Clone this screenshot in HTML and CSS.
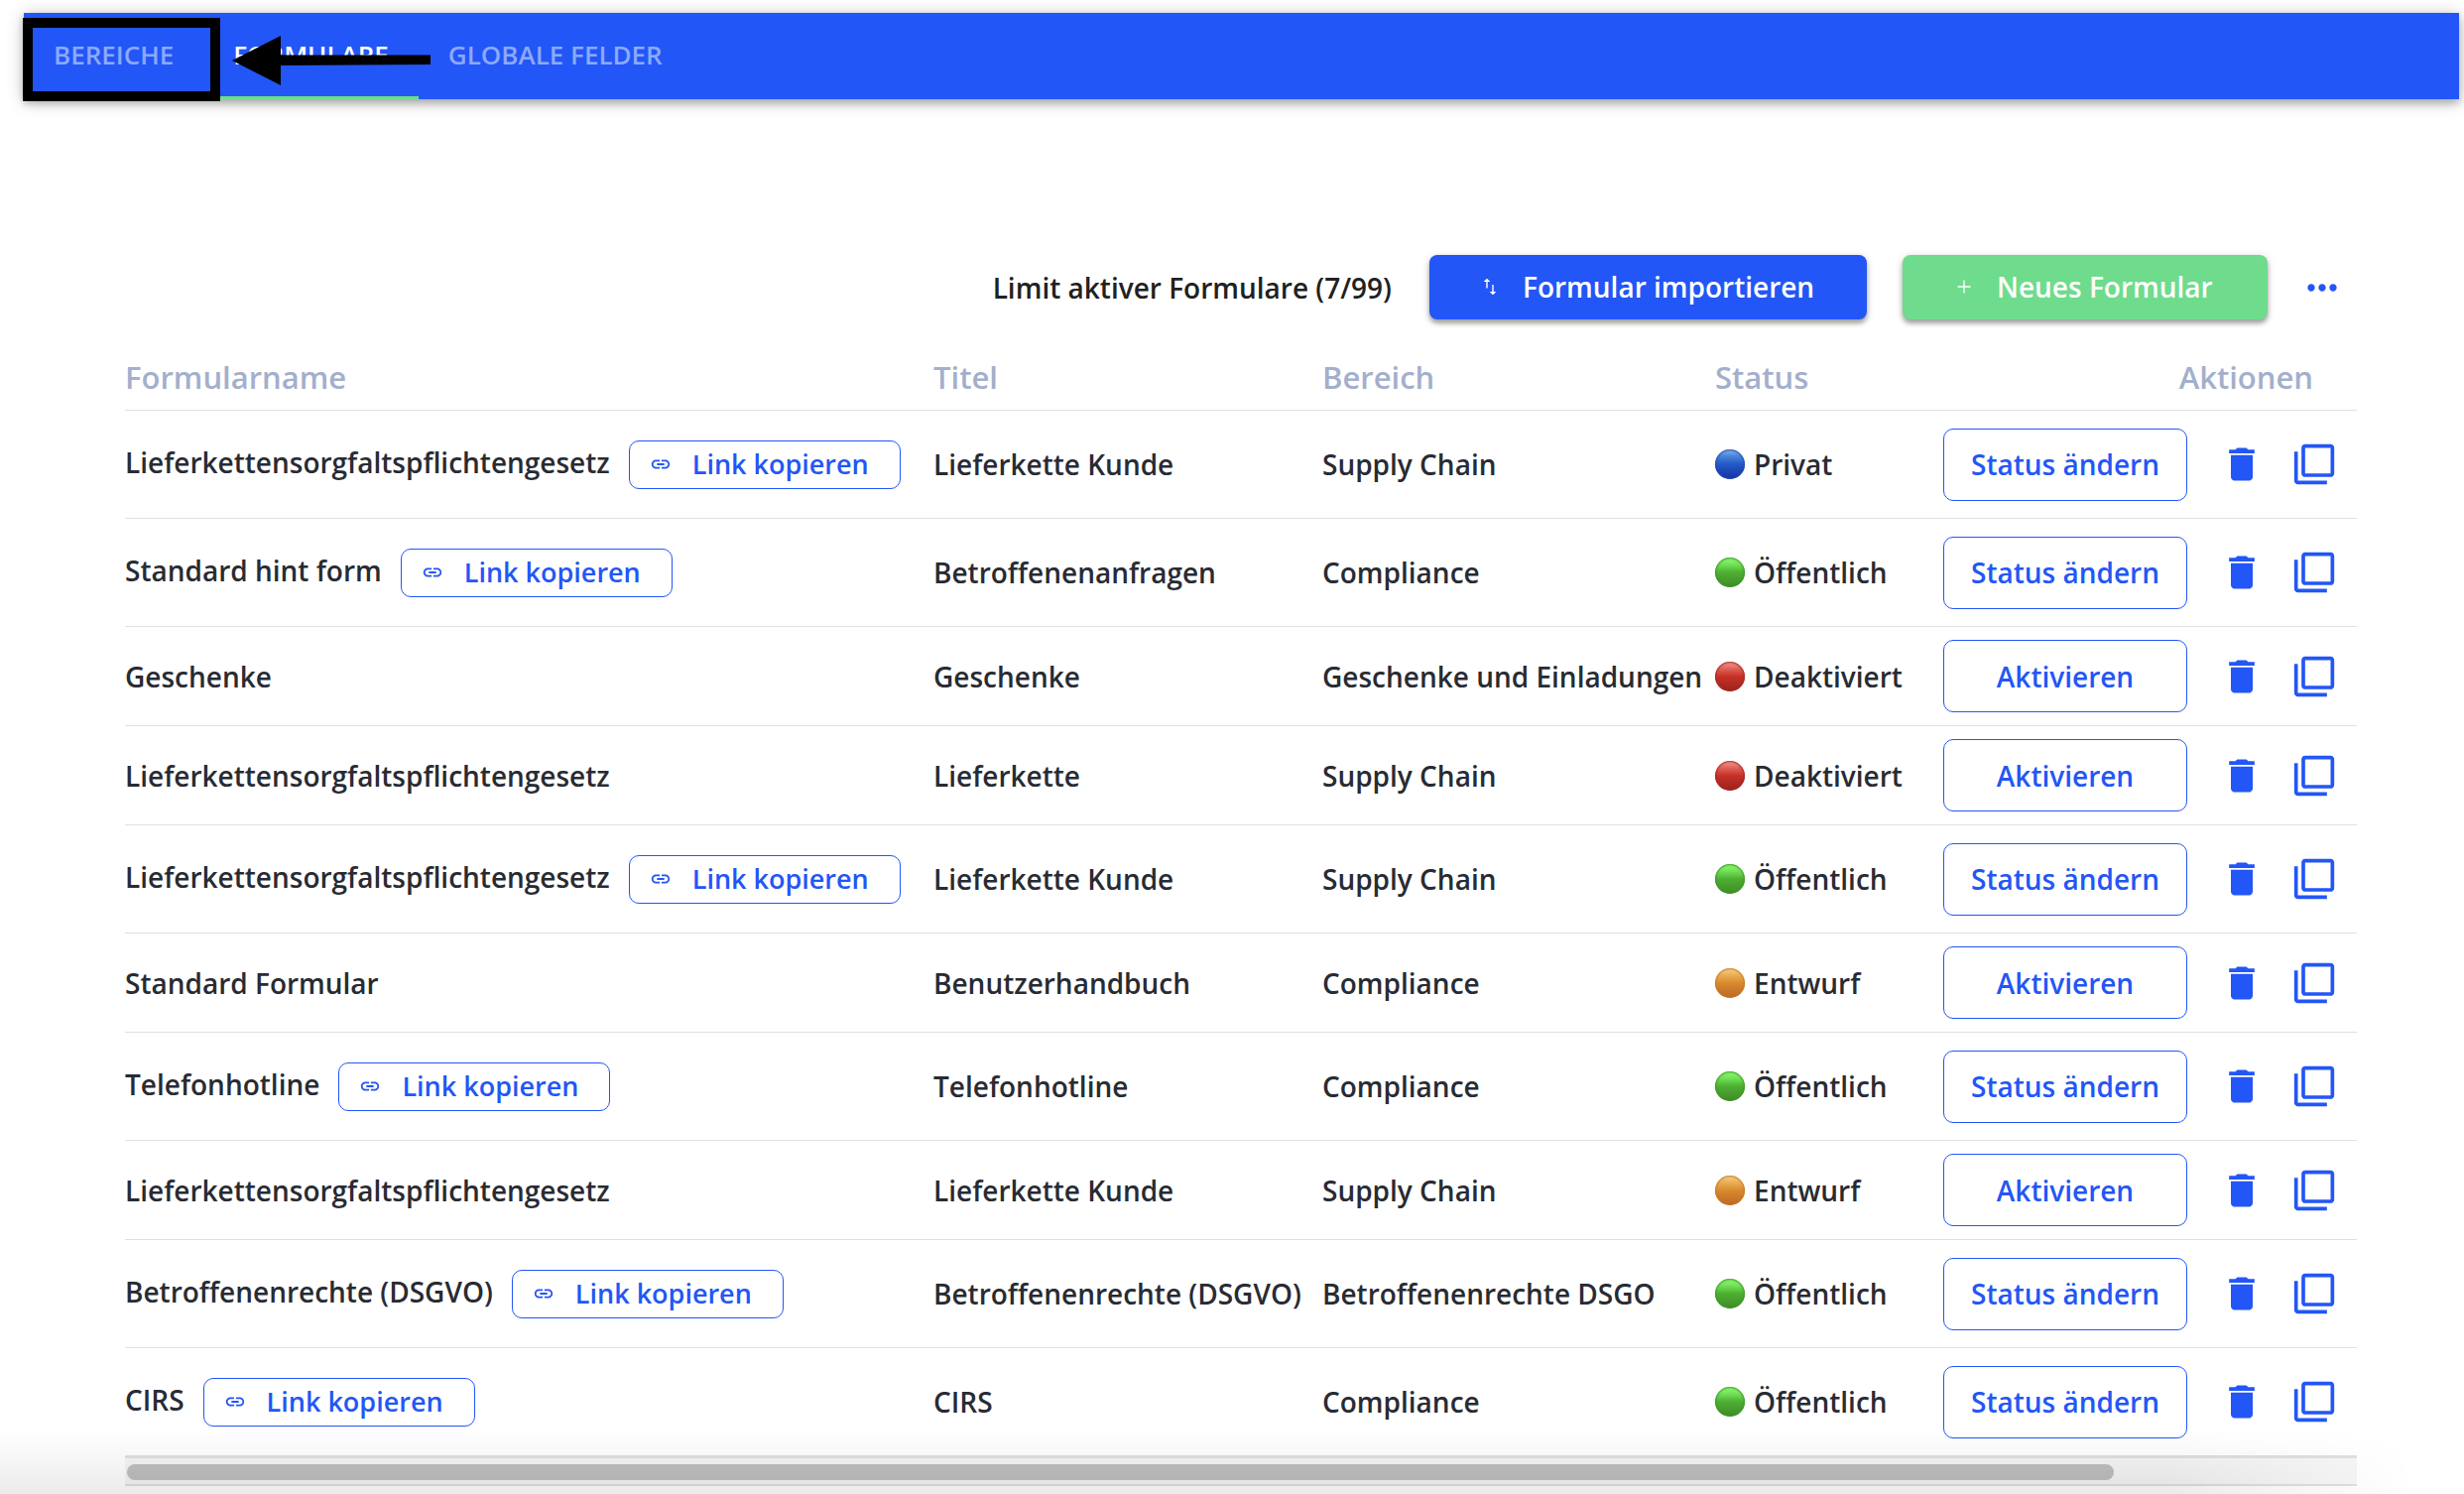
FILE: index.html
```html
<!DOCTYPE html>
<html lang="de">
<head>
<meta charset="utf-8">
<meta name="viewport" content="width=device-width, initial-scale=1">
<title>Formulare</title>
<link rel="stylesheet" href="styles.css">
</head>
<body>
<svg class="sprite" aria-hidden="true">
  <symbol id="i-link" viewBox="0 0 24 24"><path d="M3.9 12c0-1.71 1.39-3.1 3.1-3.1h4V7H7c-2.76 0-5 2.24-5 5s2.24 5 5 5h4v-1.9H7c-1.71 0-3.1-1.39-3.1-3.1zM8 13h8v-2H8v2zm9-6h-4v1.9h4c1.71 0 3.1 1.39 3.1 3.1s-1.39 3.1-3.1 3.1h-4V17h4c2.76 0 5-2.24 5-5s-2.24-5-5-5z"/></symbol>
  <symbol id="i-trash" viewBox="0 0 24 24"><path d="M6 19c0 1.1.9 2 2 2h8c1.1 0 2-.9 2-2V7H6v12zM19 4h-3.500l-1-1h-5l-1 1H5v2h14V4z"/></symbol>
  <symbol id="i-copy" viewBox="0 0 24 24"><path d="M3 5H1v16c0 1.1.9 2 2 2h16v-2H3V5zm18-4H7c-1.1 0-2 .9-2 2v14c0 1.1.9 2 2 2h14c1.1 0 2-.9 2-2V3c0-1.1-.9-2-2-2zm0 16H7V3h14v14z"/></symbol>
  <symbol id="i-dots" viewBox="0 0 24 24"><path d="M6 10c-1.1 0-2 .9-2 2s.9 2 2 2 2-.9 2-2-.9-2-2-2zm12 0c-1.1 0-2 .9-2 2s.9 2 2 2 2-.9 2-2-.9-2-2-2zm-6 0c-1.1 0-2 .9-2 2s.9 2 2 2 2-.9 2-2-.9-2-2-2z"/></symbol>
  <symbol id="i-swap" viewBox="0 0 14 18"><path d="M3.300 10.500V4H.6L4 .8 7.400 4H4.700v6.500zM9.300 7v7H6.600L10 17.200 13.400 14H10.700V7z"/></symbol>
  <symbol id="i-plus" viewBox="0 0 14 14"><path d="M7 0.500v13M0.500 7h13" fill="none" stroke="currentColor" stroke-width="1.400"/></symbol>
</svg>

<header class="topbar">
  <nav class="tabs">
    <a class="tab" href="#bereiche">BEREICHE</a>
    <a class="tab tab-active" href="#formulare" aria-current="page">FORMULARE</a>
    <a class="tab" href="#felder">GLOBALE FELDER</a>
  </nav>
  <div class="marker-box"></div>
  <svg class="marker-arrow" viewBox="0 0 200 50" aria-hidden="true"><path d="M0 25L49 0v19.500h151v9.500L49 30v20z"/></svg>
</header>

<main class="content">
  <div class="toolbar">
    <span class="limit">Limit aktiver Formulare (7/99)</span>
    <button class="btn btn-import" type="button"><svg class="ico-swap"><use href="#i-swap"/></svg>Formular importieren</button>
    <button class="btn btn-new" type="button"><svg class="ico-plus"><use href="#i-plus"/></svg>Neues Formular</button>
    <button class="icon-btn more" type="button" aria-label="Mehr"><svg><use href="#i-dots"/></svg></button>
  </div>

  <table class="forms">
    <colgroup><col><col class="c-title"><col class="c-area"><col class="c-status"><col class="c-actions"></colgroup>
    <thead>
      <tr><th>Formularname</th><th>Titel</th><th>Bereich</th><th>Status</th><th class="th-actions">Aktionen</th></tr>
    </thead>
    <tbody>
      <tr class="tall"><td><div class="name"><span>Lieferkettensorgfaltspflichtengesetz</span><button class="link-btn" type="button"><svg><use href="#i-link"/></svg>Link kopieren</button></div></td><td>Lieferkette Kunde</td><td>Supply Chain</td><td><div class="status"><i class="dot blue"></i>Privat</div></td><td><div class="actions"><button class="state-btn" type="button">Status ändern</button><button class="icon-btn trash" type="button" aria-label="Löschen"><svg><use href="#i-trash"/></svg></button><button class="icon-btn" type="button" aria-label="Kopieren"><svg><use href="#i-copy"/></svg></button></div></td></tr>
      <tr class="tall"><td><div class="name"><span>Standard hint form</span><button class="link-btn" type="button"><svg><use href="#i-link"/></svg>Link kopieren</button></div></td><td>Betroffenenanfragen</td><td>Compliance</td><td><div class="status"><i class="dot green"></i>Öffentlich</div></td><td><div class="actions"><button class="state-btn" type="button">Status ändern</button><button class="icon-btn trash" type="button" aria-label="Löschen"><svg><use href="#i-trash"/></svg></button><button class="icon-btn" type="button" aria-label="Kopieren"><svg><use href="#i-copy"/></svg></button></div></td></tr>
      <tr><td>Geschenke</td><td>Geschenke</td><td>Geschenke und Einladungen</td><td><div class="status"><i class="dot red"></i>Deaktiviert</div></td><td><div class="actions"><button class="state-btn" type="button">Aktivieren</button><button class="icon-btn trash" type="button" aria-label="Löschen"><svg><use href="#i-trash"/></svg></button><button class="icon-btn" type="button" aria-label="Kopieren"><svg><use href="#i-copy"/></svg></button></div></td></tr>
      <tr><td>Lieferkettensorgfaltspflichtengesetz</td><td>Lieferkette</td><td>Supply Chain</td><td><div class="status"><i class="dot red"></i>Deaktiviert</div></td><td><div class="actions"><button class="state-btn" type="button">Aktivieren</button><button class="icon-btn trash" type="button" aria-label="Löschen"><svg><use href="#i-trash"/></svg></button><button class="icon-btn" type="button" aria-label="Kopieren"><svg><use href="#i-copy"/></svg></button></div></td></tr>
      <tr class="tall"><td><div class="name"><span>Lieferkettensorgfaltspflichtengesetz</span><button class="link-btn" type="button"><svg><use href="#i-link"/></svg>Link kopieren</button></div></td><td>Lieferkette Kunde</td><td>Supply Chain</td><td><div class="status"><i class="dot green"></i>Öffentlich</div></td><td><div class="actions"><button class="state-btn" type="button">Status ändern</button><button class="icon-btn trash" type="button" aria-label="Löschen"><svg><use href="#i-trash"/></svg></button><button class="icon-btn" type="button" aria-label="Kopieren"><svg><use href="#i-copy"/></svg></button></div></td></tr>
      <tr><td>Standard Formular</td><td>Benutzerhandbuch</td><td>Compliance</td><td><div class="status"><i class="dot orange"></i>Entwurf</div></td><td><div class="actions"><button class="state-btn" type="button">Aktivieren</button><button class="icon-btn trash" type="button" aria-label="Löschen"><svg><use href="#i-trash"/></svg></button><button class="icon-btn" type="button" aria-label="Kopieren"><svg><use href="#i-copy"/></svg></button></div></td></tr>
      <tr class="tall"><td><div class="name"><span>Telefonhotline</span><button class="link-btn" type="button"><svg><use href="#i-link"/></svg>Link kopieren</button></div></td><td>Telefonhotline</td><td>Compliance</td><td><div class="status"><i class="dot green"></i>Öffentlich</div></td><td><div class="actions"><button class="state-btn" type="button">Status ändern</button><button class="icon-btn trash" type="button" aria-label="Löschen"><svg><use href="#i-trash"/></svg></button><button class="icon-btn" type="button" aria-label="Kopieren"><svg><use href="#i-copy"/></svg></button></div></td></tr>
      <tr><td>Lieferkettensorgfaltspflichtengesetz</td><td>Lieferkette Kunde</td><td>Supply Chain</td><td><div class="status"><i class="dot orange"></i>Entwurf</div></td><td><div class="actions"><button class="state-btn" type="button">Aktivieren</button><button class="icon-btn trash" type="button" aria-label="Löschen"><svg><use href="#i-trash"/></svg></button><button class="icon-btn" type="button" aria-label="Kopieren"><svg><use href="#i-copy"/></svg></button></div></td></tr>
      <tr class="tall"><td><div class="name"><span>Betroffenenrechte (DSGVO)</span><button class="link-btn" type="button"><svg><use href="#i-link"/></svg>Link kopieren</button></div></td><td>Betroffenenrechte (DSGVO)</td><td>Betroffenenrechte DSGO</td><td><div class="status"><i class="dot green"></i>Öffentlich</div></td><td><div class="actions"><button class="state-btn" type="button">Status ändern</button><button class="icon-btn trash" type="button" aria-label="Löschen"><svg><use href="#i-trash"/></svg></button><button class="icon-btn" type="button" aria-label="Kopieren"><svg><use href="#i-copy"/></svg></button></div></td></tr>
      <tr class="tall"><td><div class="name"><span>CIRS</span><button class="link-btn" type="button"><svg><use href="#i-link"/></svg>Link kopieren</button></div></td><td>CIRS</td><td>Compliance</td><td><div class="status"><i class="dot green"></i>Öffentlich</div></td><td><div class="actions"><button class="state-btn" type="button">Status ändern</button><button class="icon-btn trash" type="button" aria-label="Löschen"><svg><use href="#i-trash"/></svg></button><button class="icon-btn" type="button" aria-label="Kopieren"><svg><use href="#i-copy"/></svg></button></div></td></tr>
    </tbody>
  </table>
  <div class="scrollbar"><div class="thumb"></div></div>
</main>
<div class="fade"></div>
</body>
</html>
```
FILE: styles.css
```css
:root {
  --blue: #2356f6;
  --green: #6edc8c;
  --text: #282b33;
  --muted: #a3afcc;
  --line: #e0e0e0;
}

* { box-sizing: border-box; }

body {
  margin: 0;
  min-height: 100vh;
  position: relative;
  overflow-x: hidden;
  background: #fff;
  color: var(--text);
  font: 600 28px/38px "Open Sans", "Noto Sans", sans-serif;
}

button {
  font: inherit;
  margin: 0;
  padding: 0;
  cursor: pointer;
}

svg { display: block; fill: currentColor; flex: none; }
.sprite { position: absolute; width: 0; height: 0; }

/* Top navigation */
.topbar {
  position: relative;
  margin: 0 5px 0 24px;
  height: 87px;
  background: var(--blue);
  box-shadow: 0 4px 8px rgba(0, 0, 0, .25), 0 2px 18px rgba(0, 0, 0, .2);
}
body { padding-top: 13px; }
.tabs { display: flex; height: 100%; }
.tab {
  display: flex;
  align-items: center;
  padding: 0 30px;
  font-size: 26px;
  font-weight: 600;
  color: #8ca9fa;
  text-decoration: none;
  border-bottom: 3px solid transparent;
}
.tab-active { color: #fff; border-bottom-color: var(--green); }

/* Callout drawn over the navigation */
.marker-box {
  position: absolute;
  left: -1px;
  top: 5px;
  width: 199px;
  height: 84px;
  border: 10px solid #000;
}
.marker-arrow {
  position: absolute;
  left: 210px;
  top: 23px;
  width: 200px;
  height: 50px;
  color: #000;
}

.content { padding: 157px 108px 0 126px; }

/* Toolbar */
.toolbar {
  display: flex;
  justify-content: flex-end;
  align-items: center;
  padding-right: 13px;
}
.limit { margin-right: 38px; color: #212121; }
.btn {
  display: flex;
  align-items: center;
  height: 65px;
  padding-bottom: 2px;
  color: #fff;
  border: 0;
  border-radius: 8px;
  box-shadow: 0 4px 4px rgba(0, 0, 0, .28), 0 2px 8px rgba(0, 0, 0, .18);
}
.btn-import { width: 441px; padding-left: 54px; margin-right: 36px; background: var(--blue); }
.btn-new { width: 368px; padding-left: 55px; margin-right: 33px; background: var(--green); }
.ico-swap { width: 14px; height: 18px; margin-right: 26px; }
.ico-plus { width: 14px; height: 14px; margin-right: 26px; }

.icon-btn {
  border: 0;
  background: none;
  color: var(--blue);
}
.icon-btn svg { width: 44px; height: 44px; }

/* Forms table */
.forms {
  width: 100%;
  border-collapse: separate;
  border-spacing: 0;
  table-layout: fixed;
}
.c-title { width: 392px; }
.c-area { width: 396px; }
.c-status { width: 230px; }
.c-actions { width: 417px; }
.forms th, .forms td {
  padding: 0;
  text-align: left;
  vertical-align: middle;
  white-space: nowrap;
  border-bottom: 1px solid var(--line);
}
.forms th {
  height: 92px;
  padding-top: 24px;
  font-size: 31px;
  font-weight: 600;
  color: var(--muted);
}
.forms .th-actions { padding-right: 44px; text-align: right; }
.forms td { height: 100px; }
.forms .tall td { height: 109px; }
.name { display: flex; align-items: center; gap: 19px; }
.name span { padding-bottom: 4px; }
.link-btn {
  display: flex;
  align-items: center;
  gap: 21px;
  width: 274px;
  height: 49px;
  padding-left: 20px;
  font-size: 27px;
  line-height: 36px;
  color: var(--blue);
  background: none;
  border: 1px solid var(--blue);
  border-radius: 10px;
}
.link-btn svg { width: 22px; height: 22px; }
.status { display: flex; align-items: center; gap: 9px; }

.dot {
  width: 30px;
  height: 30px;
  border-radius: 50%;
  flex: none;
}
.blue { background: linear-gradient(#8fb8ee, #4a86da 22%, #2258c8 50%, #1a2f9e); box-shadow: inset 0 0 2px 1px #1d4db4; }
.green { background: linear-gradient(#8dfc72, #74e35a 22%, #4daf32 50%, #3f8a28); box-shadow: inset 0 0 2px 1px #3d9628; }
.red { background: linear-gradient(#f4a09a, #e0655c 22%, #c73026 50%, #98231d); box-shadow: inset 0 0 2px 1px #a32a22; }
.orange { background: linear-gradient(#f8d490, #eab058 22%, #d98a2e 50%, #bd6524); box-shadow: inset 0 0 2px 1px #c47a2c; }

.actions { display: flex; align-items: center; }
.state-btn {
  width: 246px;
  height: 73px;
  color: var(--blue);
  background: none;
  border: 1px solid var(--blue);
  border-radius: 10px;
}
.trash { margin: 0 29px 0 33px; }

/* Horizontal scroll track */
.scrollbar {
  height: 30px;
  padding: 6px 2px 4px;
  background: #f6f6f6;
  border: solid var(--line);
  border-width: 2px 0;
}
.thumb { width: 89.2%; height: 16px; border-radius: 8px; background: #c0c0c0; }

.fade {
  position: absolute;
  right: 0;
  bottom: 0;
  left: 0;
  height: 64px;
  background: linear-gradient(transparent, rgba(0, 0, 0, .08));
  -webkit-mask-image: linear-gradient(90deg, #000 88%, transparent 98%);
  mask-image: linear-gradient(90deg, #000 88%, transparent 98%);
  pointer-events: none;
}
```
